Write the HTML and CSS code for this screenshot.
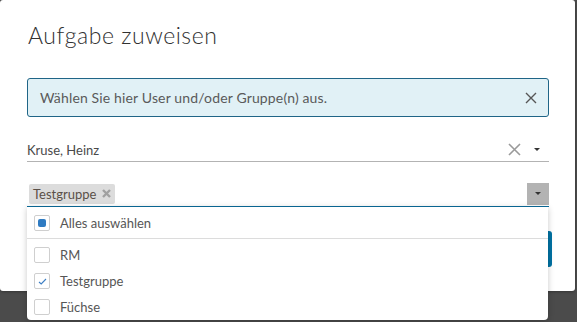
FILE: index.html
```html
<!DOCTYPE html>
<html lang="de">
<head>
<meta charset="utf-8">
<title>Aufgabe zuweisen</title>
<link rel="stylesheet" href="styles.css">
</head>
<body>
<div class="modal">
  <h3 class="modal-title">Aufgabe zuweisen</h3>
  <div class="alert">
    <span class="alert-text">Wählen Sie hier User und/oder Gruppe(n) aus.</span>
    <svg class="alert-close" width="12" height="12" viewBox="0 0 12 12"><path d="M1 1L11 11M11 1L1 11" stroke="#565656" stroke-width="1.4" fill="none"/></svg>
  </div>
  <div class="field field-user">
    <span class="field-value">Kruse, Heinz</span>
    <svg class="clear-icon" width="13" height="13" viewBox="0 0 13 13"><path d="M1 1L12 12M12 1L1 12" stroke="#9a9a9a" stroke-width="1.6" fill="none"/></svg>
    <span class="caret"></span>
  </div>
  <div class="field field-group">
    <span class="chip">Testgruppe<svg class="chip-x" width="9" height="9" viewBox="0 0 9 9"><path d="M1 1L8 8M8 1L1 8" stroke="#a0a0a0" stroke-width="2.4" fill="none"/></svg></span>
    <span class="toggle"><span class="caret"></span></span>
    <div class="menu">
      <div class="menu-row menu-all"><span class="cb cb-partial"></span><span>Alles auswählen</span></div>
      <div class="menu-sep"></div>
      <div class="menu-list">
        <div class="menu-row"><span class="cb"></span><span>RM</span></div>
        <div class="menu-row"><span class="cb cb-checked"><svg width="9" height="7" viewBox="0 0 9 7"><path d="M1 4L3.2 6L8 1" stroke="#3d7fc4" stroke-width="1.1" fill="none"/></svg></span><span>Testgruppe</span></div>
        <div class="menu-row"><span class="cb"></span><span>Füchse</span></div>
      </div>
    </div>
  </div>
  <div class="modal-footer">
    <button class="btn-primary">OK</button>
  </div>
</div>
</body>
</html>
```
FILE: styles.css
```css
html, body {
  margin: 0;
  padding: 0;
}
body {
  background: #4b4b4b;
  width: 577px;
  height: 322px;
  overflow: hidden;
  font-family: Lato, "Open Sans", sans-serif;
  color: #565656;
}
.modal {
  width: 575px;
  height: 291px;
  box-sizing: border-box;
  background: #fff;
  border-radius: 3px;
  padding: 19px 26px 0 27px;
  box-shadow: 0 1px 3px rgba(0,0,0,0.3);
}
.modal-title {
  margin: 0;
  font-size: 23px;
  font-weight: 300;
  line-height: 32px;
  color: #313131;
  letter-spacing: 0.55px;
  padding-left: 1px;
}
.alert {
  margin-top: 27px;
  height: 39px;
  box-sizing: border-box;
  background: #e1f1f6;
  border: 1px solid #1f6587;
  border-radius: 3px;
  display: flex;
  align-items: center;
  padding: 0 11px 0 12px;
}
.alert-text {
  flex: 1;
  font-size: 14px;
  letter-spacing: 0.15px;
  color: #5a5a5a;
}
.field {
  display: flex;
  align-items: center;
  box-sizing: border-box;
  position: relative;
}
.field-user {
  margin-top: 18px;
  height: 27px;
  padding-top: 3px;
  border-bottom: 1px solid #b3b3b3;
  padding-right: 9px;
}
.field-value {
  flex: 1;
  font-size: 13px;
  color: #4a4a4a;
}
.clear-icon {
  margin-right: 13px;
}
.caret {
  width: 0;
  height: 0;
  border-left: 3px solid transparent;
  border-right: 3px solid transparent;
  border-top: 3px solid #333;
}
.field-group {
  margin-top: 20px;
  height: 25px;
  border-bottom: 1px solid #0b6d9c;
  padding: 0 0 1px 2px;
  justify-content: space-between;
}
.chip {
  display: inline-flex;
  align-items: center;
  height: 20px;
  background: #dcdcdc;
  border-radius: 2px;
  padding: 0 4px 0 4px;
  font-size: 13px;
  color: #5a5048;
  gap: 6px;
}
.toggle {
  width: 22px;
  height: 22px;
  background: #b3b3b3;
  display: flex;
  align-items: center;
  justify-content: center;
}
.menu {
  position: absolute;
  top: 25px;
  left: 0;
  width: 521px;
  height: 113px;
  background: #fff;
  border-radius: 0 0 4px 4px;
  box-shadow: 0 1px 6px rgba(0,0,0,0.22);
  z-index: 5;
  font-size: 13px;
  color: #565656;
}
.menu-row {
  display: flex;
  align-items: center;
  height: 26px;
  padding-left: 7px;
  gap: 10px;
}
.menu-all {
  height: 31px;
}
.menu-sep {
  height: 1px;
  background: #dcdcdc;
}
.menu-list {
  padding-top: 3px;
}
.cb {
  width: 14px;
  height: 14px;
  border: 1px solid #cfcfcf;
  border-radius: 2px;
  background: #fff;
  display: flex;
  align-items: center;
  justify-content: center;
}
.cb-partial::after {
  content: "";
  width: 8px;
  height: 8px;
  border-radius: 2px;
  background: #2f7bc2;
}
.modal-footer {
  margin-top: 24px;
  display: flex;
  justify-content: flex-end;
  margin-right: -3px;
}
.btn-primary {
  height: 36px;
  padding: 0 24px;
  border: none;
  border-radius: 3px;
  background: #0072a3;
  color: #fff;
  font-family: inherit;
  font-size: 12px;
}
```
